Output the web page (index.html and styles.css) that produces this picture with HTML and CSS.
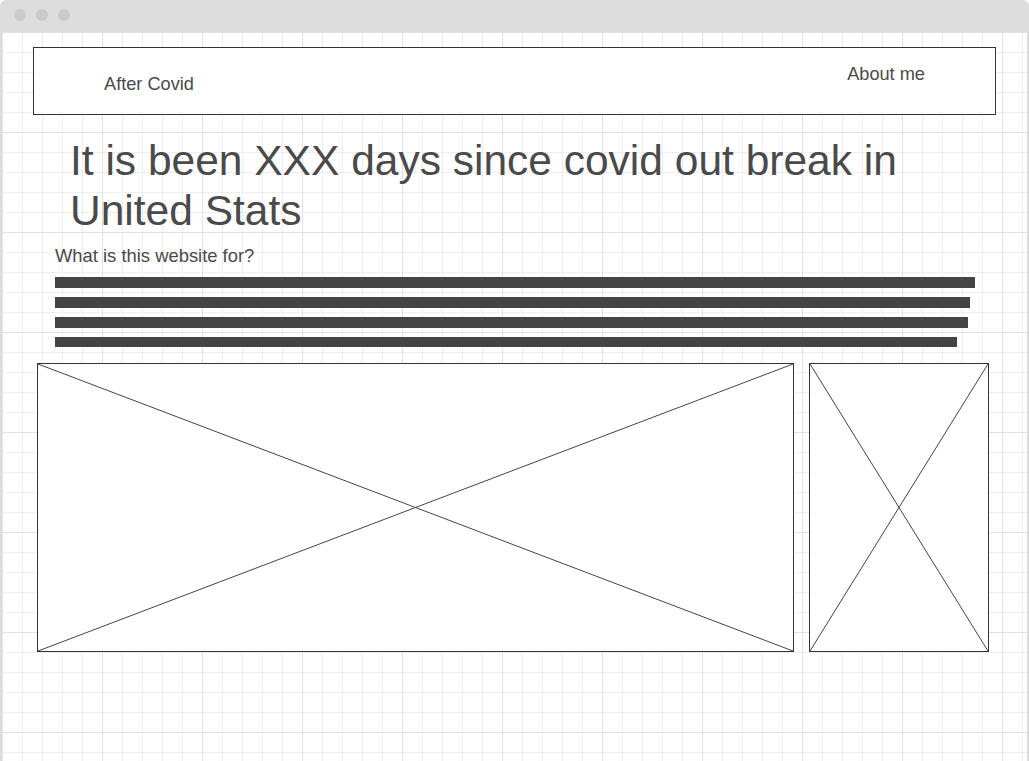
FILE: index.html
```html
<!DOCTYPE html>
<html lang="en">
<head>
<meta charset="utf-8">
<title>After Covid</title>
<link rel="stylesheet" href="styles.css">
</head>
<body>
<div class="window">
  <div class="titlebar">
    <span class="dot"></span><span class="dot"></span><span class="dot"></span>
  </div>
  <div class="canvas">
    <header class="nav">
      <span class="brand">After Covid</span>
      <span class="about">About me</span>
    </header>
    <h1 class="headline">It is been XXX days since covid out break in United Stats</h1>
    <p class="question">What is this website for?</p>
    <div class="lines">
      <div class="line line-1"></div>
      <div class="line line-2"></div>
      <div class="line line-3"></div>
      <div class="line line-4"></div>
    </div>
    <div class="images">
      <div class="placeholder placeholder-main">
        <svg viewBox="0 0 100 100" preserveAspectRatio="none"><line x1="0" y1="0" x2="100" y2="100"/><line x1="100" y1="0" x2="0" y2="100"/></svg>
      </div>
      <div class="placeholder placeholder-side">
        <svg viewBox="0 0 100 100" preserveAspectRatio="none"><line x1="0" y1="0" x2="100" y2="100"/><line x1="100" y1="0" x2="0" y2="100"/></svg>
      </div>
    </div>
  </div>
</div>
</body>
</html>
```

FILE: styles.css
```css
html, body {
  margin: 0;
  padding: 0;
  background: #ffffff;
  overflow: hidden;
}

.window {
  width: 1029px;
  height: 761px;
  font-family: "Liberation Sans", Arial, sans-serif;
  color: #4a4a4a;
}

.titlebar {
  height: 32px;
  box-sizing: border-box;
  background: #dddddd;
  border-radius: 6px 6px 0 0;
  display: flex;
  align-items: flex-start;
  gap: 10px;
  padding: 9px 0 0 14px;
}

.dot {
  width: 12px;
  height: 12px;
  border-radius: 50%;
  background: #cacaca;
}

.canvas {
  height: 729px;
  box-sizing: border-box;
  border-left: 2px solid #dddddd;
  border-right: 2px solid #dddddd;
  display: flex;
  flex-direction: column;
  align-items: flex-start;
  background-color: #ffffff;
  background-image:
    linear-gradient(to right, #e2e2e2 1px, transparent 1px),
    linear-gradient(to bottom, #e2e2e2 1px, transparent 1px),
    linear-gradient(to right, #eeeeee 1px, transparent 1px),
    linear-gradient(to bottom, #eeeeee 1px, transparent 1px);
  background-size: 100px 100px, 100px 100px, 20px 20px, 20px 20px;
}

.nav {
  margin: 15px 0 0 31px;
  width: 963px;
  height: 68px;
  box-sizing: border-box;
  border: 1px solid #333333;
  background: #ffffff;
  display: flex;
  justify-content: space-between;
  align-items: flex-start;
  font-size: 18.2px;
}

.brand {
  padding: 26px 0 0 70px;
}

.about {
  padding: 16px 70px 0 0;
}

.headline {
  margin: 21px 0 0 68px;
  width: 900px;
  font-size: 42.5px;
  font-weight: normal;
  line-height: 50px;
}

.question {
  margin: 9px 0 0 53px;
  font-size: 18.4px;
}

.lines {
  margin: 10px 0 0 53px;
  display: flex;
  flex-direction: column;
  gap: 9px;
}

.line {
  height: 11px;
  background: #444444;
}

.line-1 { width: 920px; }
.line-2 { width: 915px; }
.line-3 { width: 913px; }
.line-4 { width: 902px; height: 10px; }

.images {
  margin: 16px 0 0 35px;
  display: flex;
  gap: 15px;
}

.placeholder {
  height: 289px;
  box-sizing: border-box;
  border: 1px solid #333333;
  background: #ffffff;
}

.placeholder svg {
  display: block;
  width: 100%;
  height: 100%;
}

.placeholder line {
  stroke: #444444;
  stroke-width: 1;
  vector-effect: non-scaling-stroke;
}

.placeholder-main { width: 757px; }
.placeholder-side { width: 180px; }
```
